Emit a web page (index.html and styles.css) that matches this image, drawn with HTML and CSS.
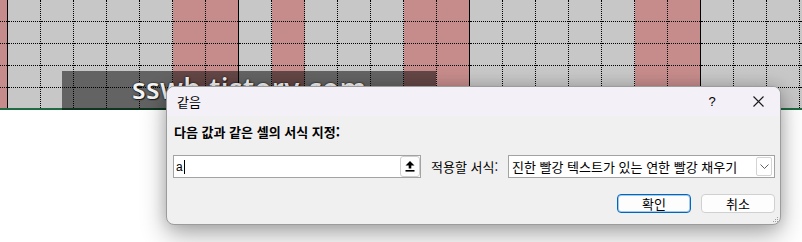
FILE: index.html
```html
<!DOCTYPE html>
<html lang="ko">
<head>
  <meta charset="UTF-8" />
  <title>같음</title>
  <link rel="stylesheet" href="styles.css">
</head>
<body>

  <!-- sheet grid -->
  <div id="sheet" class="sheet"></div>
  <div class="sheet-line"></div>

  <div class="watermark"><span>sswb.tistory.com</span></div>

  <!-- Dialog -->
  <div class="dialog">
    <div class="title-bar">
      <span class="title">같음</span>
      <span class="help">?</span>
      <span class="close">
        <svg width="11" height="11" viewBox="0 0 11 11"><path d="M0.5 0.5 L10.5 10.5 M10.5 0.5 L0.5 10.5" stroke="#1a1a1a" stroke-width="1.1" fill="none"/></svg>
      </span>
    </div>

    <div class="dialog-body">
      <div class="prompt">다음 값과 같은 셀의 서식 지정:</div>

      <div class="field-row">
        <div class="text-input">
          <span class="value">a</span><span class="caret"></span>
          <span class="ref-btn">
            <svg width="10" height="11" viewBox="0 0 10 11"><path d="M5 0 L9.5 4.5 L6.3 4.5 L6.3 7.5 L3.7 7.5 L3.7 4.5 L0.5 4.5 Z" fill="#000"/><rect x="0.5" y="9" width="9" height="1.6" fill="#000"/></svg>
          </span>
        </div>
        <span class="field-label">적용할 서식:</span>
        <div class="select">
          <span class="select-text">진한 빨강 텍스트가 있는 연한 빨강 채우기</span>
          <span class="select-btn">
            <svg width="9" height="5" viewBox="0 0 9 5"><path d="M0.5 0.5 L4.5 4.5 L8.5 0.5" stroke="#606060" stroke-width="1" fill="none"/></svg>
          </span>
        </div>
      </div>

      <div class="button-row">
        <button class="btn primary">확인</button>
        <button class="btn">취소</button>
      </div>
    </div>

    <svg class="grip" width="6" height="6" viewBox="0 0 6 6">
      <rect x="4" y="0" width="1" height="1" fill="#a0a0a0"/>
      <rect x="2" y="2" width="1" height="1" fill="#a0a0a0"/>
      <rect x="4" y="2" width="1" height="1" fill="#a0a0a0"/>
      <rect x="0" y="4" width="1" height="1" fill="#a0a0a0"/>
      <rect x="2" y="4" width="1" height="1" fill="#a0a0a0"/>
      <rect x="4" y="4" width="1" height="1" fill="#a0a0a0"/>
    </svg>
  </div>

  <script>
    const sheet = document.getElementById("sheet");
    const redCols = [0, 6, 7, 9, 13, 14, 20, 21];
    const weekEnds = [0, 7, 14, 21];

    for (let k = 0; k < 26; k++) {
      const col = document.createElement("div");
      col.className = "col";
      if (k === 0) col.classList.add("first");
      if (redCols.includes(k)) col.classList.add("red");
      if (weekEnds.includes(k)) col.classList.add("week-end");
      for (let r = 0; r < 5; r++) {
        const cell = document.createElement("div");
        cell.className = "cell";
        col.appendChild(cell);
      }
      sheet.appendChild(col);
    }
  </script>

</body>
</html>
```

FILE: styles.css
```css
body {
  margin: 0;
  background: #fff;
  font-family: "Noto Sans CJK KR", "Noto Sans", sans-serif;
  font-size: 13px;
  color: #000;
  overflow: hidden;
}

/* sheet */
.sheet {
  display: flex;
  height: 108px;
  overflow: hidden;
}

.col {
  flex: none;
  width: 33px;
  box-sizing: border-box;
  border-right: 1px dotted #000;
  background: #c7c7c7;
}

.col.first {
  width: 8px;
}

.col.red {
  background: #c68c8c;
}

.col.week-end {
  border-right: 1px solid #000;
}

.cell {
  height: 22px;
  box-sizing: border-box;
  border-bottom: 1px dotted #000;
}

.sheet-line {
  height: 2px;
  background: #1f6b43;
}

.watermark {
  position: absolute;
  left: 62px;
  top: 71px;
  width: 374px;
  height: 39px;
  background: rgba(0, 0, 0, 0.5);
  box-sizing: border-box;
  padding-left: 70px;
}

.watermark span {
  font-family: "Open Sans", sans-serif;
  font-weight: 600;
  font-size: 28px;
  letter-spacing: 0.4px;
  line-height: 34px;
  color: #f4f4f4;
  text-shadow: 0 0 2px #000, 1px 1px 1px #222;
}

/* dialog */
.dialog {
  position: absolute;
  left: 166px;
  top: 86px;
  width: 615px;
  height: 139px;
  box-sizing: border-box;
  border: 1px solid #9c9c9c;
  border-radius: 8px;
  background: #f0f0f0;
  overflow: hidden;
  box-shadow: 0 10px 26px rgba(0, 0, 0, 0.32), 0 0 14px rgba(0, 0, 0, 0.14);
}

.title-bar {
  display: flex;
  align-items: center;
  height: 29px;
  background: #f3f0f7;
}

.title {
  flex: 1;
  padding-left: 10px;
}

.help {
  width: 20px;
  margin-right: 26px;
  text-align: center;
  font-family: "Liberation Sans", sans-serif;
  font-size: 13px;
}

.close {
  display: flex;
  justify-content: center;
  width: 20px;
  margin-right: 12px;
}

.dialog-body {
  padding: 7px 5px 0 6px;
}

.prompt {
  font-weight: bold;
  line-height: 17px;
  padding-left: 1px;
}

.field-row {
  display: flex;
  align-items: center;
  margin-top: 15px;
  height: 23px;
}

.text-input {
  display: flex;
  align-items: center;
  width: 248px;
  height: 23px;
  box-sizing: border-box;
  border: 1px solid #a3a3a3;
  background: #fff;
  padding-left: 2px;
}

.value {
  font-family: "Liberation Sans", sans-serif;
  font-size: 12px;
}

.caret {
  width: 1px;
  height: 14px;
  background: #000;
  margin-left: 1px;
}

.ref-btn {
  display: flex;
  align-items: center;
  justify-content: center;
  margin-left: auto;
  width: 20px;
  height: 21px;
  box-sizing: border-box;
  border: 1px solid #cfcfcf;
  border-radius: 3px;
  background: #fdfdfd;
}

.field-label {
  margin-left: 10px;
}

.select {
  display: flex;
  align-items: center;
  margin-left: auto;
  width: 267px;
  height: 23px;
  box-sizing: border-box;
  border: 1px solid #a3a3a3;
  background: #fff;
  padding-left: 3px;
}

.select-text {
  flex: 1;
  white-space: nowrap;
}

.select-btn {
  display: flex;
  align-items: center;
  justify-content: center;
  width: 16px;
  height: 19px;
  box-sizing: border-box;
  border: 1px solid #d4d4d4;
  border-radius: 2px;
  margin-right: 2px;
}

.button-row {
  display: flex;
  justify-content: flex-end;
  gap: 10px;
  margin-top: 16px;
}

.btn {
  width: 74px;
  height: 19px;
  padding: 0;
  box-sizing: border-box;
  border: 1px solid #d0d0d0;
  border-radius: 4px;
  background: #fdfdfd;
  font-family: "Noto Sans CJK KR", sans-serif;
  font-size: 13px;
  line-height: 17px;
  color: #000;
}

.btn.primary {
  border-color: #0067c0;
  box-shadow: inset 0 0 0 1px rgba(0, 103, 192, 0.35);
}

.grip {
  position: absolute;
  right: 1px;
  bottom: 1px;
}
```
